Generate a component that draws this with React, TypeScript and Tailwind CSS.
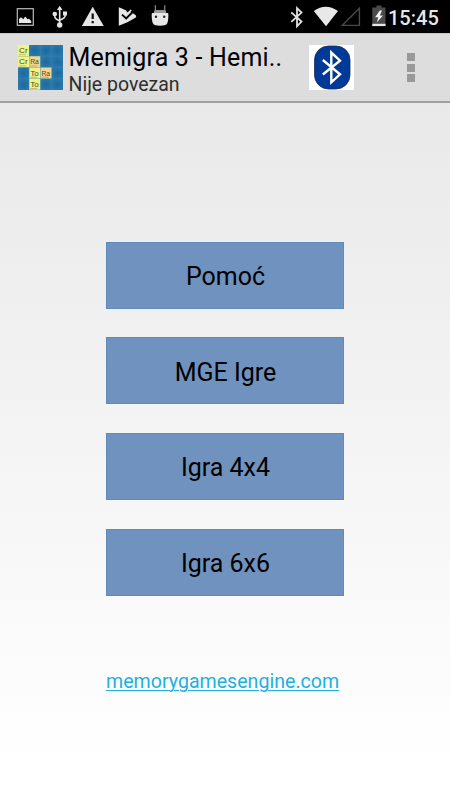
import React from 'react';

const MENU_ITEMS = ['Pomoć', 'MGE Igre', 'Igra 4x4', 'Igra 6x6'];

// Element tiles that are turned face up in the launcher icon
const TILES = [
  { col: 0, row: 0, label: 'Cr', color: '#eef588' },
  { col: 0, row: 1, label: 'Cr', color: '#eef588' },
  { col: 1, row: 1, label: 'Ra', color: '#f2d58c' },
  { col: 1, row: 2, label: 'To', color: '#eef588' },
  { col: 2, row: 2, label: 'Ra', color: '#f2d58c' },
  { col: 1, row: 3, label: 'To', color: '#eef588' },
];

const GRID = [0, 1, 2, 3];

function AppIcon() {
  return (
    <svg width="45" height="45" viewBox="0 0 45 45" className="shrink-0">
      <defs>
        <radialGradient id="tile" r="0.75">
          <stop offset="0" stopColor="#1c689e" />
          <stop offset="1" stopColor="#3080b0" />
        </radialGradient>
      </defs>
      <rect width="45" height="45" fill="#3283b3" />
      {GRID.map(row =>
        GRID.map(col => (
          <rect key={`${row}-${col}`} x={col * 11.25} y={row * 11.25} width="11.25" height="11.25" fill="url(#tile)" />
        ))
      )}
      {TILES.map(({ col, row, label, color }) => (
        <g key={`${row}-${col}`}>
          <rect x={col * 11.25} y={row * 11.25} width="11" height="11" fill={color} />
          <text
            x={col * 11.25 + 1}
            y={row * 11.25 + 8}
            fontSize="8"
            textLength="8.6"
            lengthAdjust="spacingAndGlyphs"
            fill="#4a4a2c"
            fontFamily="Liberation Sans, sans-serif"
          >
            {label}
          </text>
          <path d={`M${col * 11.25 + 1} ${row * 11.25 + 9.7}h7`} stroke="#99995c" strokeWidth="0.6" />
        </g>
      ))}
    </svg>
  );
}

function NotificationIcons() {
  return (
    <div className="flex items-center">
      <svg width="18" height="33" viewBox="16 0 18 33">
        <rect x="17.3" y="8.7" width="16" height="16.6" fill="none" stroke="#bcbcbc" strokeWidth="1.2" />
        <path d="M19 23v-4l2-1.8 2.2 2 2-2.8 2.4 2.8 1.4-.4 2.2 2.2v2z" fill="#e8e8e8" />
      </svg>
      <svg width="16" height="33" viewBox="52 0 16 33" className="ml-[18px]">
        <path d="M59.7 8v17M54.8 14v2.7q0 1.8 4.9 4.3M65 14v2.2q0 1.6-5.3 4" fill="none" stroke="#e4e4e4" strokeWidth="1.6" />
        <path d="M59.7 5.7l2.8 4.3h-5.6zM63 11.5h4v4h-4z" fill="#e4e4e4" />
        <circle cx="54.8" cy="14" r="2.3" fill="#e4e4e4" />
        <circle cx="59.7" cy="25" r="2.7" fill="#e4e4e4" />
      </svg>
      <svg width="22" height="33" viewBox="82 0 22 33" className="ml-[14px]">
        <path d="M92.7 6.8L103.7 26H81.8z" fill="#e6e6e6" />
        <path d="M91.6 13.5h2.2v5.5h-2.2zM91.6 21h2.2v2.3h-2.2z" fill="#111" />
      </svg>
      <svg width="19" height="33" viewBox="118 0 19 33" className="ml-[14px]">
        <path d="M118.8 7.2q3.6 1.2 7.4 3.2l1.2 2 3-1 5.4 3.8q.8 1.1 0 2.2-7.8 5.2-17 8.4z" fill="#e6e6e6" />
        <path d="M122 14.6l4.2 3.8 6.4-6.4" fill="none" stroke="#000" strokeWidth="1.9" />
        <path d="M125.2 13.2l1.4 1.3 4.6-4.5" fill="none" stroke="#e6e6e6" strokeWidth="1.6" />
      </svg>
      <svg width="18" height="33" viewBox="151 0 18 33" className="ml-[14px]">
        <path d="M155.3 5.2v5.5M164.8 5.2v5.5" stroke="#a8a8a8" strokeWidth="1" />
        <path d="M154 13.4v-1.7q0-1.7 1.7-1.7h8.7q1.7 0 1.7 1.7v1.7z" fill="#999" />
        <path d="M151.7 14.3q0-1.2 1.2-1.2h14.3q1.2 0 1.2 1.2 0 7.6-1.6 9.8-1.2 1.6-6.7 1.6t-6.7-1.6q-1.7-2.2-1.7-9.8z" fill="#e6e6e6" />
        <circle cx="156" cy="16.8" r="1.2" fill="#222" />
        <circle cx="164.2" cy="16.8" r="1.2" fill="#222" />
      </svg>
    </div>
  );
}

function SystemIcons() {
  return (
    <div className="flex items-center">
      <svg width="14" height="33" viewBox="290 0 14 33">
        <path d="M291.3 12.3l10.2 9.3-4.5 4.6V8.2l4.5 4.4-10.2 9.3" fill="none" stroke="#e2e2e2" strokeWidth="1.8" />
      </svg>
      <svg width="26" height="33" viewBox="313 0 26 33" className="ml-[9px]">
        <path d="M313.8 11q11.8-8.6 24.2 0L326 26.3z" fill="#e8e8e8" />
      </svg>
      <svg width="20" height="33" viewBox="341 0 20 33" className="ml-[2px]">
        <path d="M342.2 25.4L359.4 8.2v17.2z" fill="none" stroke="#494949" strokeWidth="1.4" />
      </svg>
      <svg width="14" height="33" viewBox="372 0 14 33" className="ml-[11px]">
        <path d="M376.5 5.5h5v2h4v18.6H372.3V7.5h4.2z" fill="#4b4b4b" />
        <path d="M372.3 23.8h13.2v2.3h-13.2z" fill="#e8e8e8" />
        <path d="M379.8 10.5l-4.7 6.7h3.2l-1.5 5.2 6.2-7h-3.2l2.2-4.9z" fill="#f2f2f2" />
      </svg>
    </div>
  );
}

function StatusBar() {
  return (
    <div className="flex h-[33px] shrink-0 items-center justify-between bg-black pr-[11.5px] pl-4">
      <NotificationIcons />
      <div className="flex items-center">
        <SystemIcons />
        <span className="ml-[2px] w-[50.5px] pt-[3px] text-[20px] leading-[30px] font-medium whitespace-nowrap text-[#e6e6e6]">15:45</span>
      </div>
    </div>
  );
}

function ActionBar() {
  return (
    <header className="flex h-[70px] shrink-0 items-start border-t border-b-2 border-t-[#c8c5c8] border-b-[#a0a0a0] bg-[#dddddd] pt-[11px] pl-[18px]">
      <AppIcon />
      <div className="ml-[5.5px] w-[240.5px] whitespace-nowrap">
        <h1 className="-mt-px text-[25px] leading-[27px] tracking-[0.18px] text-black">Memigra 3 - Hemi..</h1>
        <p className="text-[19.5px] leading-[27px] text-[#2e2e2e]">Nije povezan</p>
      </div>
      <button className="h-[45px] w-[45px] shrink-0 bg-white" aria-label="Bluetooth">
        <svg width="45" height="45" viewBox="0 0 45 45">
          <rect x="5.5" y="1" width="35.5" height="43" rx="14" fill="#003a99" stroke="#1b2c50" strokeWidth="0.8" />
          <path d="M13.8 15L31 29.3l-8.7 8V7.6l8.7 8L13.8 29.5" fill="none" stroke="#fff" strokeWidth="2.4" />
        </svg>
      </button>
      <button className="mt-2 ml-[53px] flex flex-col gap-[2.5px]" aria-label="Menu">
        <span className="h-2 w-2 bg-[#999999]" />
        <span className="h-2 w-2 bg-[#999999]" />
        <span className="h-2 w-2 bg-[#999999]" />
      </button>
    </header>
  );
}

export default function App() {
  return (
    <div className="flex h-[800px] w-[450px] flex-col overflow-hidden font-[Roboto,sans-serif]">
      <StatusBar />
      <ActionBar />
      <main className="flex flex-1 flex-col bg-linear-to-b from-[#e9e9e9] to-white to-95% px-[106px] pt-[138.8px]">
        <div className="flex flex-col gap-[28.6px]">
          {MENU_ITEMS.map(item => (
            <button key={item} className="h-[67px] w-[238px] border border-[#5f8abd] bg-[#7092be] pt-[3px] pl-px text-[25px] text-black">
              {item}
            </button>
          ))}
        </div>
        <a href="#" className="mt-[74.5px] self-start text-[19.6px] leading-6 text-[#1fb0e0] underline decoration-1 underline-offset-[2px]">
          memorygamesengine.com
        </a>
      </main>
    </div>
  );
}
